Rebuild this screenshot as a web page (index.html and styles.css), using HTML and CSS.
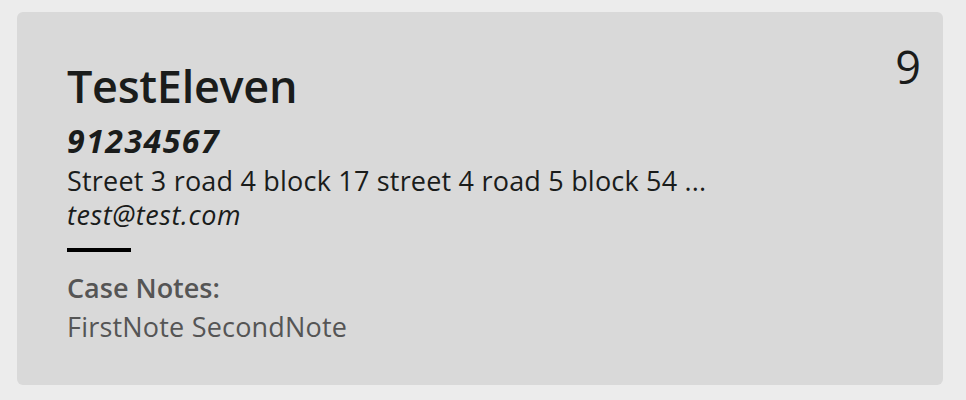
FILE: index.html
```html
<!DOCTYPE html>
<html>
<head>
<meta charset="utf-8">
<link rel="stylesheet" href="styles.css">
</head>
<body>
<div class="card">
  <div class="info">
    <div class="name">TestEleven</div>
    <div class="phone">91234567</div>
    <div class="address">Street 3 road 4 block 17 street 4 road 5 block 54 ...</div>
    <div class="email">test@test.com</div>
    <div class="divider"></div>
    <div class="notes-label">Case Notes:</div>
    <div class="notes">FirstNote SecondNote</div>
  </div>
  <div class="index">9</div>
</div>
</body>
</html>
```
FILE: styles.css
```css
html, body {
  margin: 0;
  padding: 0;
  background: #ececec;
}
body {
  padding: 12px 23px 15px 17px;
  font-family: "Open Sans", "Noto Sans", sans-serif;
  color: #1a1c1b;
}
.card {
  background: #d9d9d9;
  border-radius: 6px;
  height: 373px;
  box-sizing: border-box;
  padding: 48px 22px 0 50px;
  display: flex;
  justify-content: space-between;
}
.info {
  display: flex;
  flex-direction: column;
}
.name {
  font-size: 45px;
  font-weight: 600;
  line-height: 52px;
  letter-spacing: -0.3px;
}
.phone {
  margin-top: 8px;
  font-size: 32px;
  font-weight: 700;
  font-style: italic;
  line-height: 42px;
  letter-spacing: 1.5px;
}
.address {
  font-size: 27px;
  line-height: 37px;
  letter-spacing: 0.2px;
}
.email {
  font-size: 27px;
  font-style: italic;
  line-height: 32px;
  letter-spacing: 0.6px;
}
.divider {
  width: 64px;
  height: 4px;
  background: #000;
  margin-top: 17px;
}
.notes-label {
  margin-top: 18px;
  font-size: 27px;
  font-weight: 600;
  color: #555;
  line-height: 36px;
}
.notes {
  font-size: 27px;
  color: #555;
  line-height: 42px;
  letter-spacing: 0.2px;
}
.index {
  font-size: 45px;
  font-weight: 500;
  line-height: 52px;
  margin-top: -19px;
}
```
